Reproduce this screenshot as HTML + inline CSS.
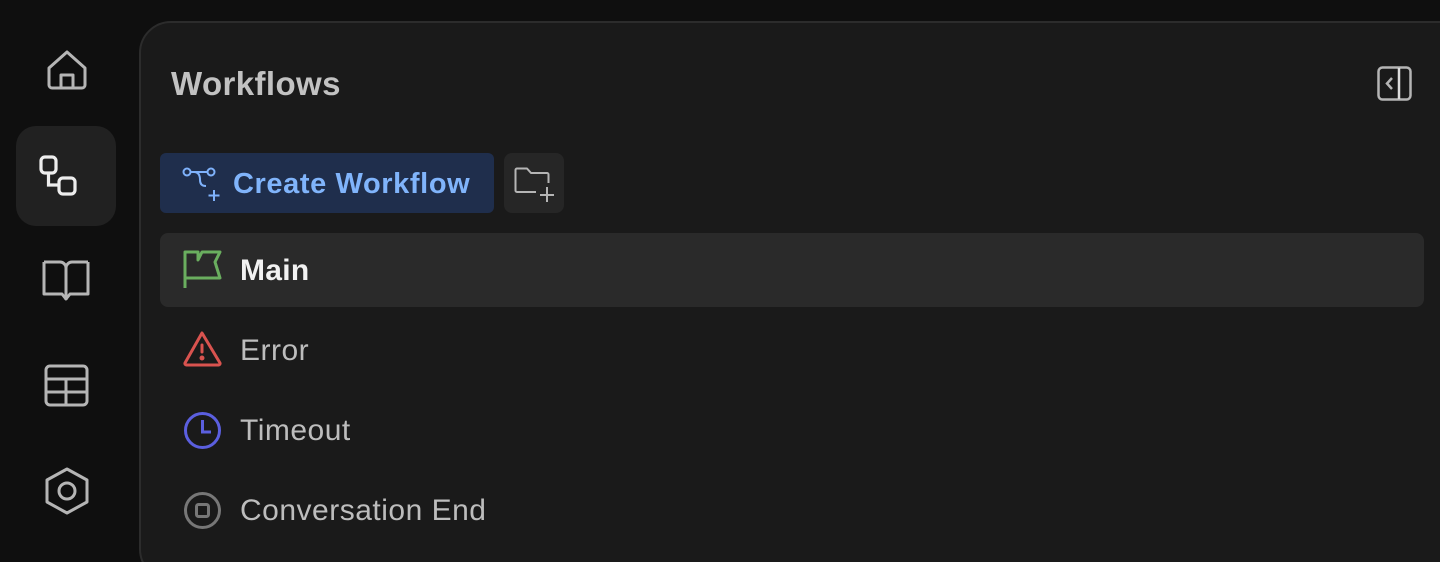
<!DOCTYPE html>
<html><head><style>
*{margin:0;padding:0;box-sizing:border-box}
html,body{width:1440px;height:562px;overflow:hidden}
body{background:#0f0f0f;font-family:"Liberation Sans",sans-serif;position:relative}
.abs{position:absolute}
.panel{left:139px;top:21px;width:1340px;height:560px;background:#1a1a1a;border:2px solid #2c2c2c;border-radius:32px}
.title{left:171px;top:65px;font-size:33px;color:#c2c2c2;font-weight:bold;letter-spacing:0.4px}
.btn{left:160px;top:153px;width:334px;height:60px;background:#1f2e4c;border-radius:6px}
.btn span{position:absolute;left:73px;top:15px;font-size:29px;color:#80b4fb;font-weight:bold;letter-spacing:0.6px}
.fbtn{left:504px;top:153px;width:60px;height:60px;background:#262626;border-radius:8px}
.row{left:160px;width:1264px;height:74px;border-radius:8px}
.row span{position:absolute;left:80px;top:21px;font-size:30px;color:#bdbdbd;letter-spacing:0.5px}
.side{left:16px;top:126px;width:100px;height:100px;background:#212121;border-radius:20px}
svg{position:absolute}
</style></head><body>
<div class="abs side"></div>
<svg style="left:44px;top:48px" width="46" height="46" viewBox="0 0 46 46" fill="none" stroke="#b5b5b5" stroke-width="3" stroke-linejoin="round"><path d="M5 20 L23 4 L41 20 V37 a3 3 0 0 1 -3 3 H8 a3 3 0 0 1 -3 -3 Z"/><path d="M17 40 V27 h12 V40"/></svg>
<svg style="left:38px;top:154px" width="42" height="46" viewBox="0 0 42 46" fill="none" stroke="#ededed" stroke-width="3.2"><rect x="3" y="3" width="15" height="16" rx="4"/><rect x="21" y="24" width="16" height="16" rx="4"/><path d="M10.5 19 V31 H21"/></svg>
<svg style="left:42px;top:258px" width="50" height="46" viewBox="0 0 50 46" fill="none" stroke="#b5b5b5" stroke-width="3" stroke-linejoin="round"><path d="M2 4 H18 a6 6 0 0 1 6 6 V42"/><path d="M46 4 H30 a6 6 0 0 0 -6 6"/><path d="M2 4 V36 H20 L24 41 L28 36 H46 V4"/></svg>
<svg style="left:44px;top:364px" width="46" height="44" viewBox="0 0 46 44" fill="none" stroke="#b5b5b5" stroke-width="3"><rect x="2" y="2" width="41" height="39" rx="4"/><path d="M2 15 H43 M2 28 H43 M22 15 V41"/></svg>
<svg style="left:44px;top:467px" width="46" height="48" viewBox="0 0 46 48" fill="none" stroke="#b5b5b5" stroke-width="3" stroke-linejoin="round"><path d="M23 2 L43 13 V35 L23 46 L3 35 V13 Z"/><circle cx="23" cy="24" r="8"/></svg>

<div class="abs panel"></div>
<div class="abs title">Workflows</div>
<svg style="left:1377px;top:66px" width="35" height="35" viewBox="0 0 35 35" fill="none" stroke="#b5b5b5" stroke-width="2.5"><rect x="1.5" y="1.5" width="32" height="32" rx="4"/><path d="M22 2 V33" stroke="#dcdcdc"/><path d="M15 12 L10 17.5 L15 23"/></svg>

<div class="abs btn"><span>Create Workflow</span></div>
<svg style="left:182px;top:164px" width="40" height="38" viewBox="0 0 40 38" fill="none" stroke="#7fb2fb" stroke-width="2"><circle cx="5" cy="8" r="3.5"/><circle cx="29" cy="8" r="3.5"/><path d="M8.5 8 H25.5"/><path d="M12 8 Q18 8 18 16 Q18 22 24 22"/><path d="M32 26 V37 M26.5 31.5 H37.5"/></svg>
<div class="abs fbtn"></div>
<svg style="left:514px;top:167px" width="42" height="36" viewBox="0 0 42 36" fill="none" stroke="#b5b5b5" stroke-width="2" stroke-linejoin="round"><path d="M22 25 H3 a1.5 1.5 0 0 1 -1.5 -1.5 V3 a1.5 1.5 0 0 1 1.5 -1.5 H13 L17 6 H33 a1.5 1.5 0 0 1 1.5 1.5 V16"/><path d="M33 20 V35 M26 28 H40"/></svg>

<div class="abs row" style="top:233px;background:#2a2a2a"><span style="color:#f2f2f2;font-weight:bold;letter-spacing:0.3px">Main</span></div>
<svg style="left:182px;top:250px" width="40" height="40" viewBox="0 0 40 40" fill="none" stroke="#6aae5f" stroke-width="3" stroke-linejoin="round"><path d="M3 38 V2 H16 V10 L20 2 H38 L33 12 L38 28 H3"/></svg>
<div class="abs row" style="top:313px"><span>Error</span></div>
<svg style="left:183px;top:331px" width="40" height="36" viewBox="0 0 40 36" fill="none" stroke="#d9534f" stroke-width="3" stroke-linejoin="round"><path d="M19 2 L37 32 a1.5 1.5 0 0 1 -1.5 2 H3.5 a1.5 1.5 0 0 1 -1.5 -2 Z"/><path d="M19 14 V21" stroke-linecap="round"/><circle cx="19" cy="27" r="1" fill="#d9534f"/></svg>
<div class="abs row" style="top:393px"><span>Timeout</span></div>
<svg style="left:183px;top:411px" width="39" height="39" viewBox="0 0 39 39" fill="none" stroke="#5b5fdf" stroke-width="3"><circle cx="19.5" cy="19.5" r="17"/><path d="M19.5 9 V21 H28"/></svg>
<div class="abs row" style="top:473px"><span>Conversation End</span></div>
<svg style="left:183px;top:491px" width="39" height="39" viewBox="0 0 39 39" fill="none" stroke="#777" stroke-width="3"><circle cx="19.5" cy="19.5" r="17"/><rect x="13.5" y="13.5" width="12" height="12" rx="2"/></svg>
</body></html>
